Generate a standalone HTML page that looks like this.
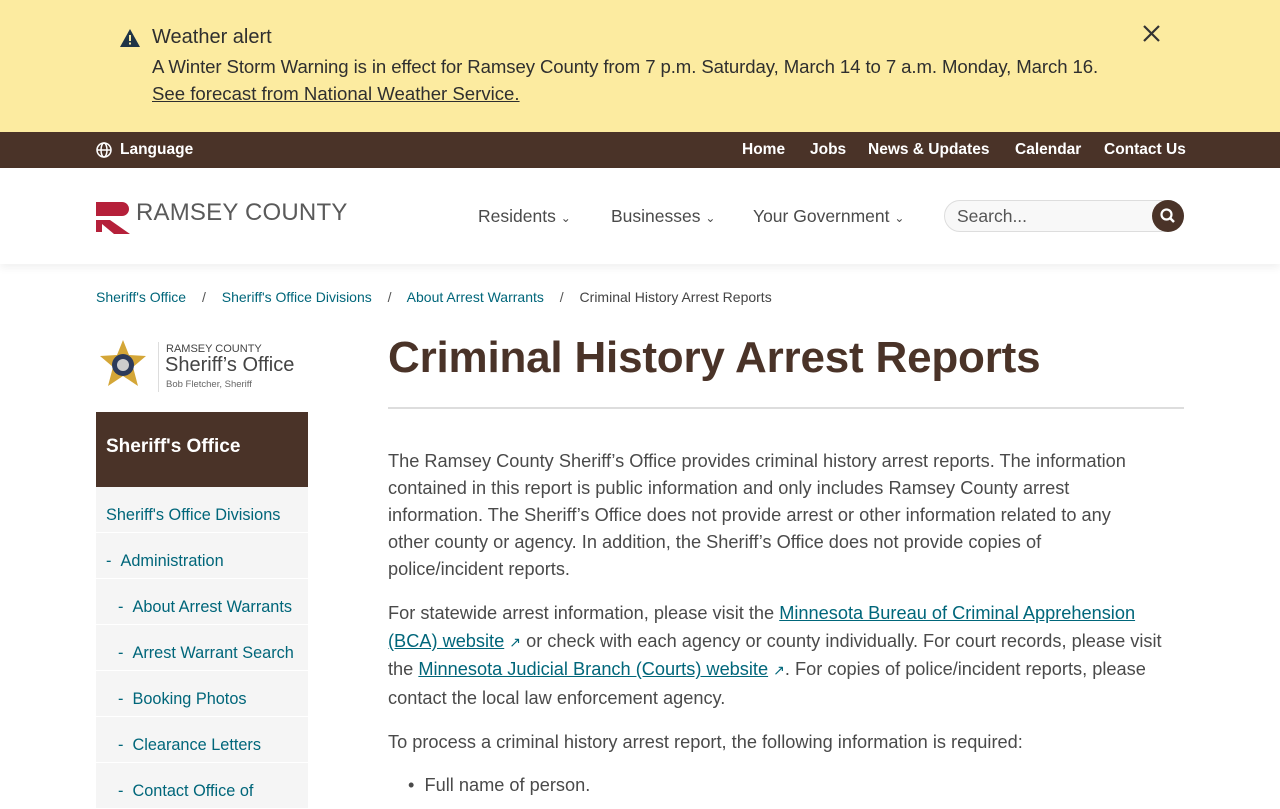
<!DOCTYPE html>
<html><head><meta charset="utf-8"><style>
*{margin:0;padding:0;box-sizing:border-box}
body{width:1280px;height:800px;overflow:hidden;font-family:"Liberation Sans",sans-serif;color:#4a4a4a;background:#fff;position:relative}
a{color:#00667a;text-decoration:underline}
.alert{background:#fceba0;height:132px;position:relative;color:#2f2f2f}
.alert .t{position:absolute;left:152px;top:26px;font-size:20px}
.alert .l1{position:absolute;left:152px;top:56px;font-size:18.6px;white-space:nowrap;letter-spacing:-.1px}
.alert .l2{position:absolute;left:152px;top:83px;font-size:18.6px;text-decoration:underline}
.util{background:#4a3328;height:36px;color:#fff;font-weight:bold;font-size:15.5px;position:relative}
.util span{position:absolute;top:9px}
.hdr{height:96px;position:relative;box-shadow:0 4px 8px rgba(0,0,0,.06)}
.nav{position:absolute;top:206px;font-size:17.5px;color:#4a4a4a}
.crumb{position:absolute;top:289px;font-size:14px;white-space:nowrap}
.side{position:absolute;left:96px;top:412px;width:212px}
.side .h{background:#4a3328;color:#fff;font-weight:bold;font-size:19px;height:75px;padding:24px 10px}
.side .i{background:#f5f5f5;color:#00667a;font-size:16.3px;height:46px;padding-top:19px;border-bottom:1px solid #fff;white-space:nowrap}
p{font-size:18.2px;line-height:27px;white-space:nowrap}
</style></head><body>
<div class="alert">
<svg style="position:absolute;left:120px;top:29px" width="20" height="18" viewBox="0 0 20 18"><path d="M10 0L20 18H0Z" fill="#1f3447"/><rect x="9" y="6" width="2" height="6" fill="#fceba0"/><rect x="9" y="13.5" width="2" height="2" fill="#fceba0"/></svg>
<div class="t">Weather alert</div>
<div class="l1">A Winter Storm Warning is in effect for Ramsey County from 7 p.m. Saturday, March 14 to 7 a.m. Monday, March 16.</div>
<div class="l2">See forecast from National Weather Service.</div>
<svg style="position:absolute;left:1143px;top:25px" width="17" height="17"><path d="M1 1L16 16M16 1L1 16" stroke="#333" stroke-width="2.2"/></svg>
</div>
<div class="util">
<svg style="position:absolute;left:96px;top:10px" width="16" height="16" viewBox="0 0 16 16" fill="none" stroke="#fff" stroke-width="1.5"><circle cx="8" cy="8" r="7"/><ellipse cx="8" cy="8" rx="3" ry="7"/><path d="M1 8H15"/></svg>
<span style="left:120px">Language</span>
<span style="left:742px">Home</span><span style="left:810px">Jobs</span><span style="left:868px">News &amp; Updates</span><span style="left:1015px">Calendar</span><span style="left:1104px">Contact Us</span>
</div>
<div class="hdr"></div>
<svg style="position:absolute;left:96px;top:202px" width="36" height="32" viewBox="0 0 36 32"><path d="M0 0H26A7 7 0 0 1 26 14H0Z M0 18H14L34 32H18L6 22V30H0Z" fill="#b5203a"/></svg>
<div style="position:absolute;left:136px;top:199px;font-size:24px;color:#5a5a5a;letter-spacing:.2px">RAMSEY COUNTY</div>
<div class="nav" style="left:478px">Residents <span style="font-size:12px">&#8964;</span></div>
<div class="nav" style="left:611px">Businesses <span style="font-size:12px">&#8964;</span></div>
<div class="nav" style="left:753px">Your Government <span style="font-size:12px">&#8964;</span></div>
<div style="position:absolute;left:944px;top:200px;width:240px;height:32px;border:1px solid #ddd;border-radius:16px;background:#f8f8f8;font-size:17.5px;padding:5px 12px;color:#555">Search...</div>
<div style="position:absolute;left:1152px;top:200px;width:32px;height:32px;border-radius:50%;background:#4a3328"><svg width="32" height="32"><circle cx="14.5" cy="14.5" r="5" stroke="#fff" stroke-width="2.2" fill="none"/><path d="M18 18L22 22" stroke="#fff" stroke-width="2.5"/></svg></div>
<div class="crumb" style="left:96px"><a style="text-decoration:none">Sheriff's Office</a> <span style="margin:0 12px;color:#555">/</span> <a style="text-decoration:none">Sheriff's Office Divisions</a> <span style="margin:0 12px;color:#555">/</span> <a style="text-decoration:none">About Arrest Warrants</a> <span style="margin:0 12px;color:#555">/</span> <span style="color:#444">Criminal History Arrest Reports</span></div>
<svg style="position:absolute;left:98px;top:340px" width="50" height="48" viewBox="0 0 50 48"><path d="M25 0L31 15L48 16L35 27L40 46L25 36L10 46L15 27L2 16L19 15Z" fill="#d4a637"/><circle cx="25" cy="25" r="11" fill="#2d3b5a"/><circle cx="25" cy="25" r="6" fill="#ccc"/></svg>
<div style="position:absolute;left:158px;top:342px;width:1px;height:50px;background:#ddd"></div>
<div style="position:absolute;left:166px;top:343px;font-size:11px;color:#444">RAMSEY COUNTY</div>
<div style="position:absolute;left:165px;top:354px;font-size:20px;color:#444">Sheriff’s Office</div>
<div style="position:absolute;left:166px;top:379px;font-size:9.5px;color:#666">Bob Fletcher, Sheriff</div>
<div class="side">
<div class="h">Sheriff's Office</div>
<div class="i" style="padding-left:10px">Sheriff's Office Divisions</div>
<div class="i" style="padding-left:10px">- &nbsp;Administration</div>
<div class="i" style="padding-left:22px">- &nbsp;About Arrest Warrants</div>
<div class="i" style="padding-left:22px">- &nbsp;Arrest Warrant Search</div>
<div class="i" style="padding-left:22px">- &nbsp;Booking Photos</div>
<div class="i" style="padding-left:22px">- &nbsp;Clearance Letters</div>
<div class="i" style="padding-left:22px">- &nbsp;Contact Office of</div>
</div>
<div style="position:absolute;left:388px;top:333px;font-size:44px;font-weight:bold;color:#4a3328;letter-spacing:-.2px;white-space:nowrap">Criminal History Arrest Reports</div>
<div style="position:absolute;left:388px;top:407px;width:796px;height:2px;background:#ddd"></div>
<div style="position:absolute;left:388px;top:448px">
<p>The Ramsey County Sheriff’s Office provides criminal history arrest reports. The information<br>contained in this report is public information and only includes Ramsey County arrest<br>information. The Sheriff’s Office does not provide arrest or other information related to any<br>other county or agency. In addition, the Sheriff’s Office does not provide copies of<br>police/incident reports.</p>
<p style="margin-top:17px;line-height:27.7px">For statewide arrest information, please visit the <a>Minnesota Bureau of Criminal Apprehension</a><br><a>(BCA) website</a> <span style="color:#00667a;font-size:14px">↗</span> or check with each agency or county individually. For court records, please visit<br>the <a>Minnesota Judicial Branch (Courts) website</a> <span style="color:#00667a;font-size:14px">↗</span>. For copies of police/incident reports, please<br>contact the local law enforcement agency.</p>
<p style="margin-top:16px">To process a criminal history arrest report, the following information is required:</p>
<p style="margin-top:16px;padding-left:20px">•&nbsp; Full name of person.</p>
</div>
</body></html>
